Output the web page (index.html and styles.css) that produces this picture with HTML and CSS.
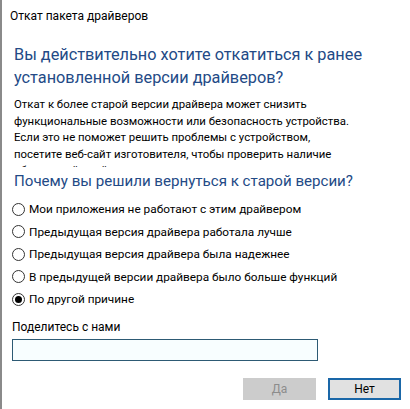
FILE: index.html
```html
<!DOCTYPE html>
<html lang="ru">
<head>
<meta charset="utf-8">
<link rel="stylesheet" href="styles.css">
</head>
<body>
<div class="window">
  <div class="title">Откат пакета драйверов</div>
  <div class="content">
    <h1 class="heading">Вы действительно хотите откатиться к ранее<br>установленной версии драйверов?</h1>
    <div class="desc">
      <p>Откат к более старой версии драйвера может снизить<br>функциональные возможности или безопасность устройства.<br>Если это не поможет решить проблемы с устройством,<br>посетите веб-сайт изготовителя, чтобы проверить наличие<br>обновлений драйверов.</p>
    </div>
    <h2 class="question">Почему вы решили вернуться к старой версии?</h2>
    <div class="options">
      <label class="option"><span class="radio"></span>Мои приложения не работают с этим драйвером</label>
      <label class="option"><span class="radio"></span>Предыдущая версия драйвера работала лучше</label>
      <label class="option"><span class="radio"></span>Предыдущая версия драйвера была надежнее</label>
      <label class="option"><span class="radio"></span>В предыдущей версии драйвера было больше функций</label>
      <label class="option"><span class="radio checked"></span>По другой причине</label>
    </div>
    <div class="field-label">Поделитесь с нами</div>
    <div class="input"></div>
    <div class="buttons">
      <div class="btn disabled">Да</div>
      <div class="btn primary">Нет</div>
    </div>
  </div>
</div>
</body>
</html>
```
FILE: styles.css
```css
html, body {
  margin: 0;
  padding: 0;
  background: #ffffff;
}
body {
  width: 410px;
  height: 409px;
  overflow: hidden;
  font-family: Roboto, "Noto Sans", sans-serif;
  color: #000;
}
.window {
  box-sizing: border-box;
  height: 409px;
  border-left: 2px solid #8a8a8a;
}
.title {
  font-size: 12px;
  line-height: 16px;
  padding: 8px 0 0 8px;
  height: 22px;
}
.content {
  padding: 0 0 0 10px;
}
.heading {
  margin: 13px 0 0 2px;
  font-size: 16.3px;
  font-weight: normal;
  line-height: 23px;
  color: #234a86;
  white-space: nowrap;
}
.desc {
  margin-top: 7px;
  height: 71px;
  overflow: hidden;
}
.desc p {
  margin: 0 0 0 2px;
  font-size: 11.4px;
  line-height: 16.5px;
  white-space: nowrap;
}
.question {
  margin: 3px 0 0 2px;
  font-size: 15.1px;
  font-weight: normal;
  line-height: 22px;
  color: #234a86;
  white-space: nowrap;
}
.options {
  margin-top: 6px;
  display: flex;
  flex-direction: column;
}
.option {
  display: flex;
  align-items: center;
  height: 22.5px;
  font-size: 11.8px;
}
.radio {
  box-sizing: border-box;
  width: 13px;
  height: 13px;
  border: 1px solid #333;
  border-radius: 50%;
  margin-right: 4px;
  flex: none;
  display: flex;
  align-items: center;
  justify-content: center;
}
.radio.checked::after {
  content: "";
  width: 7px;
  height: 7px;
  border-radius: 50%;
  background: #000;
}
.field-label {
  margin-top: 8px;
  font-size: 12px;
  line-height: 16px;
}
.input {
  box-sizing: border-box;
  margin-top: 4px;
  width: 306px;
  height: 22px;
  border: 1px solid #2d5a74;
  background: #f8feff;
}
.buttons {
  display: flex;
  justify-content: flex-end;
  gap: 12px;
  margin-top: 17px;
  padding-right: 9px;
}
.btn {
  box-sizing: border-box;
  width: 73px;
  height: 22px;
  display: flex;
  align-items: center;
  justify-content: center;
  font-size: 12px;
}
.btn.disabled {
  background: #cccccc;
  color: #8c8c8c;
  border: 1px solid #cccccc;
}
.btn.primary {
  background: #e1e1e1;
  border: 2px solid #1a67a8;
}
```
